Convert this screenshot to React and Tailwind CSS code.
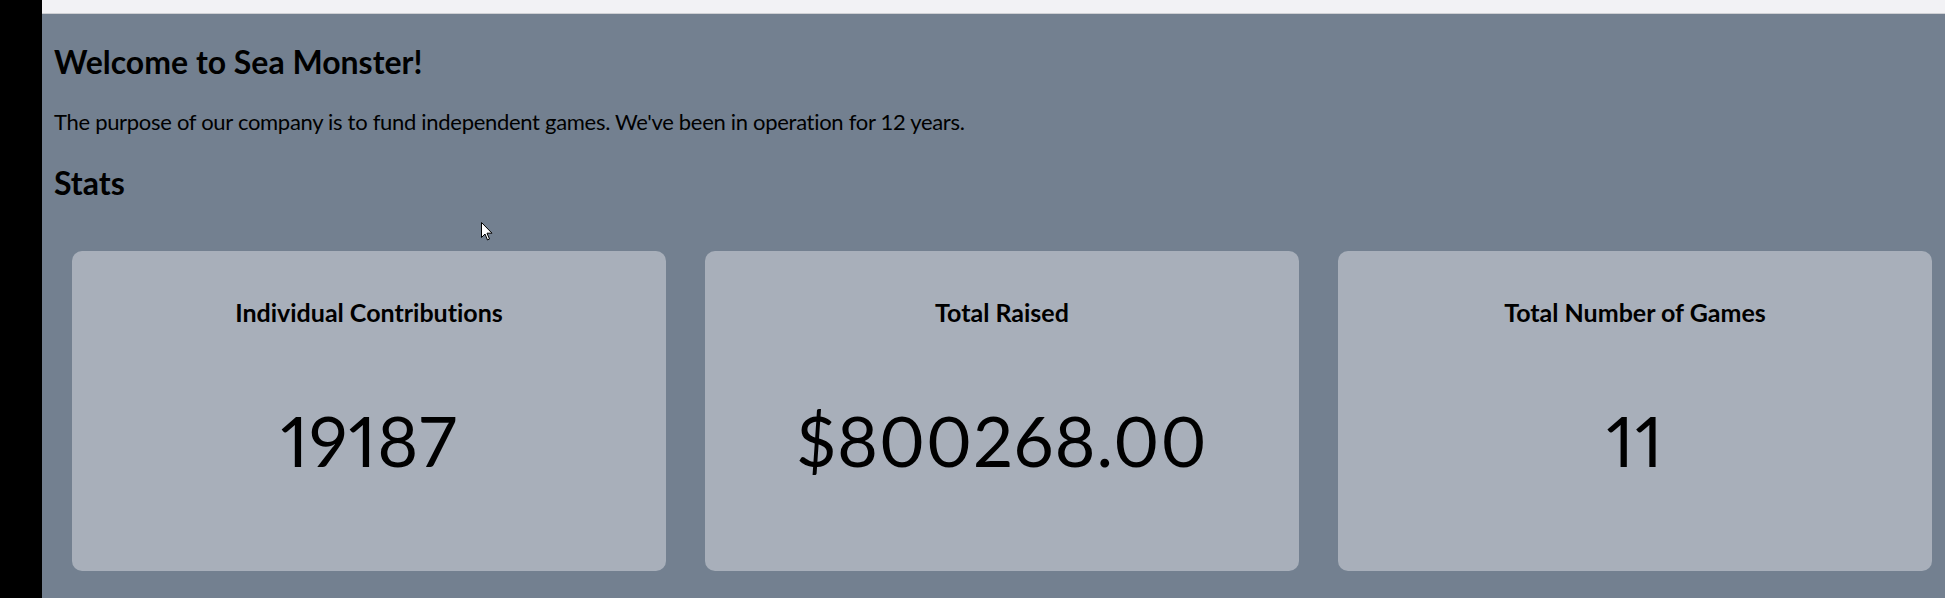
import React from "react";

const font = { fontFamily: "Lato, 'Open Sans', sans-serif" };

function Card({ title, value }) {
  return (
    <div className="flex h-[320px] flex-col items-center rounded-[10px] bg-[#a8afba] pt-[46px] text-black">
      <h2 className="text-[25px] font-bold leading-[30px]">{title}</h2>
      <p className="mt-[73px] text-[70px] leading-[80px] tracking-[1px] proportional-nums">{value}</p>
    </div>
  );
}

export default function App() {
  return (
    <div className="flex h-[598px] w-[1945px] overflow-hidden bg-black [font-variant-ligatures:none]" style={font}>
      <div className="w-[42px] shrink-0 bg-black" />
      <div className="relative flex flex-1 flex-col bg-[#738090]">
        <div className="h-[14px] shrink-0 border-b border-[#cfd0d4] bg-[#f2f2f5]" />
        <div className="pl-[12px] pr-[13px] text-black">
          <h1 className="mt-[28px] text-[32px] font-bold leading-[40px]">Welcome to Sea Monster!</h1>
          <p className="mt-[26px] text-[22px] leading-[28px] tracking-[-0.3px]">
            The purpose of our company is to fund independent games. We've been in operation for 12 years.
          </p>
          <h1 className="mt-[27px] text-[32px] font-bold leading-[40px]">Stats</h1>
          <div className="mt-[48px] grid grid-cols-3 gap-[39px] pl-[18px]">
            <Card title="Individual Contributions" value="19187" />
            <Card title="Total Raised" value="$800268.00" />
            <Card title="Total Number of Games" value="11" />
          </div>
        </div>
        <svg className="absolute left-[439px] top-[222px]" width="12" height="19" viewBox="0 0 12 19">
          <path d="M0.5 0.5 L0.5 15.5 L4 12 L6.5 18 L8.5 17 L6 11.2 L11 11.2 Z" fill="#fff" stroke="#000" strokeWidth="1" />
        </svg>
      </div>
    </div>
  );
}
